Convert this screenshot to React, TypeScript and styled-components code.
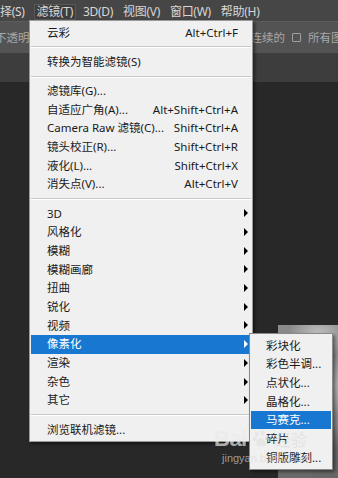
import React from "react";
import styled, { createGlobalStyle } from "styled-components";

const FONT = `"Noto Sans", "Noto Sans CJK SC", sans-serif`;

const Global = createGlobalStyle`
  html, body { margin: 0; padding: 0; background: #282828; }
  body { width: 338px; height: 478px; overflow: hidden; }
  * { box-sizing: border-box; }
`;

const Screen = styled.div`
  position: relative;
  width: 338px;
  height: 478px;
  overflow: hidden;
  display: flex;
  flex-direction: column;
  font-family: ${FONT};
  background: #282828;
`;

const MenuBar = styled.div`
  height: 21px;
  flex: none;
  display: flex;
  align-items: center;
  gap: 4px;
  padding-top: 3px;
  background: #464646;
  color: #d6d6d6;
  font-size: 12px;
  line-height: 1;
`;

const MenuBarItem = styled.div<{ $active?: boolean; $first?: boolean }>`
  height: 16px;
  display: flex;
  align-items: center;
  padding: 0 2px;
  margin-left: ${(p) => (p.$first ? "-3px" : "0")};
  margin-right: ${(p) => (p.$first ? "2px" : "0")};
  background: ${(p) => (p.$active ? "#3e3e3e" : "transparent")};
  border: 1px solid ${(p) => (p.$active ? "#585858" : "transparent")};
  white-space: nowrap;
  letter-spacing: -0.3px;
`;

const OptionsBar = styled.div`
  height: 32px;
  flex: none;
  display: flex;
  align-items: center;
  justify-content: space-between;
  background: #535353;
  border-top: 1px solid #5c5c5c;
  color: #a8a8a8;
  font-size: 11.5px;
  line-height: 1;
  overflow: hidden;
`;

const OptionsLeft = styled.div`
  margin-left: -5px;
  white-space: nowrap;
`;

const OptionsRight = styled.div`
  display: flex;
  align-items: center;
  gap: 7px;
  white-space: nowrap;
  margin-right: -16px;
`;

const CheckBox = styled.span`
  width: 9px;
  height: 9px;
  border: 1px solid #a0a0a0;
  border-radius: 1px;
  display: inline-block;
`;

const TabStrip = styled.div`
  height: 29px;
  flex: none;
  background: #3d3d3d;
`;

const Canvas = styled.div`
  flex: 1;
  display: flex;
  padding: 243px 0 0 278px;
  background: #282828;
`;

const CloudImage = styled.div`
  flex: 1;
  background:
    radial-gradient(ellipse 30px 24px at 40px 10px, #c2c2c2 0%, rgba(194,194,194,0) 100%),
    radial-gradient(ellipse 26px 30px at 55px 60px, #b0b0b0 0%, rgba(176,176,176,0) 100%),
    radial-gradient(ellipse 22px 26px at 20px 90px, #9c9c9c 0%, rgba(156,156,156,0) 100%),
    radial-gradient(ellipse 30px 30px at 50px 130px, #5e5e5e 0%, rgba(94,94,94,0) 100%),
    linear-gradient(180deg, #8a8a8a 0%, #8f8f8f 50%, #6a6a6a 100%);
`;

const DropMenu = styled.div`
  position: absolute;
  left: 29px;
  top: 20px;
  width: 224px;
  padding: 2px 1px;
  background: #f0f0f0;
  border: 1px solid #9a9a9a;
  box-shadow: 2px 2px 3px rgba(0, 0, 0, 0.45);
  font-size: 11.5px;
  line-height: 1;
  color: #1a1a1a;
`;

const SubMenu = styled(DropMenu)`
  left: 249px;
  top: 333px;
  width: 84px;
  border-color: #8a8a8a;
`;

const Row = styled.div<{ $active?: boolean; $indent?: number }>`
  height: 18.7px;
  display: grid;
  grid-template-columns: 1fr auto 13px;
  align-items: center;
  padding-left: ${(p) => p.$indent ?? 16}px;
  background: ${(p) => (p.$active ? "#1777d1" : "transparent")};
  color: ${(p) => (p.$active ? "#ffffff" : "#1a1a1a")};
  white-space: nowrap;
`;

const Label = styled.span``;

const Shortcut = styled.span`
  text-align: right;
  padding-left: 8px;
`;

const Arrow = styled.span<{ $active?: boolean }>`
  justify-self: end;
  margin-right: 3px;
  width: 0;
  height: 0;
  border-top: 4px solid transparent;
  border-bottom: 4px solid transparent;
  border-left: 4px solid ${(p) => (p.$active ? "#ffffff" : "#000000")};
`;

const Separator = styled.div`
  height: 10.5px;
  display: flex;
  align-items: center;
  &::after {
    content: "";
    flex: 1;
    height: 1px;
    background: #c8c8c8;
    box-shadow: 0 1px 0 #ffffff;
  }
`;

const Watermark = styled.div`
  position: absolute;
  left: 214px;
  top: 428px;
  display: grid;
  grid-template-columns: auto auto auto;
  align-items: center;
  column-gap: 2px;
  pointer-events: none;
`;

const WmBai = styled.span`
  font-family: "Liberation Sans", sans-serif;
  font-weight: bold;
  font-size: 22px;
  line-height: 1;
  color: rgba(235, 235, 235, 0.7);
  letter-spacing: -0.5px;
`;

const WmJing = styled.span`
  font-size: 16px;
  line-height: 1;
  color: rgba(200, 200, 200, 0.35);
  font-family: "Noto Sans CJK SC", sans-serif;
`;

const WmSub = styled.span`
  grid-column: 1 / span 3;
  font-family: "Liberation Sans", sans-serif;
  font-size: 11px;
  line-height: 1;
  margin-top: 3px;
  margin-left: 8px;
  color: rgba(220, 220, 220, 0.65);
`;

type Item =
  | { sep: true }
  | { label: string; shortcut?: string; sub?: boolean; active?: boolean };

const mainItems: Item[] = [
  { label: "云彩", shortcut: "Alt+Ctrl+F" },
  { sep: true },
  { label: "转换为智能滤镜(S)" },
  { sep: true },
  { label: "滤镜库(G)..." },
  { label: "自适应广角(A)...", shortcut: "Alt+Shift+Ctrl+A" },
  { label: "Camera Raw 滤镜(C)...", shortcut: "Shift+Ctrl+A" },
  { label: "镜头校正(R)...", shortcut: "Shift+Ctrl+R" },
  { label: "液化(L)...", shortcut: "Shift+Ctrl+X" },
  { label: "消失点(V)...", shortcut: "Alt+Ctrl+V" },
  { sep: true },
  { label: "3D", sub: true },
  { label: "风格化", sub: true },
  { label: "模糊", sub: true },
  { label: "模糊画廊", sub: true },
  { label: "扭曲", sub: true },
  { label: "锐化", sub: true },
  { label: "视频", sub: true },
  { label: "像素化", sub: true, active: true },
  { label: "渲染", sub: true },
  { label: "杂色", sub: true },
  { label: "其它", sub: true },
  { sep: true },
  { label: "浏览联机滤镜..." },
];

const subItems = [
  { label: "彩块化" },
  { label: "彩色半调..." },
  { label: "点状化..." },
  { label: "晶格化..." },
  { label: "马赛克...", active: true },
  { label: "碎片" },
  { label: "铜版雕刻..." },
];

function Paw() {
  return (
    <svg width="16" height="18" viewBox="0 0 16 18">
      <g fill="rgba(225,225,225,0.7)">
        <ellipse cx="4" cy="4" rx="2" ry="2.6" />
        <ellipse cx="9.5" cy="3" rx="2" ry="2.6" />
        <ellipse cx="1.8" cy="9" rx="1.8" ry="2.2" />
        <ellipse cx="13.5" cy="8" rx="1.8" ry="2.2" />
        <path d="M7.5 8 C4 8 2.5 13 3.5 15 C4.5 17 7 16 8 16 C9.5 16 12 17 12.8 15 C13.5 12.5 11 8 7.5 8 Z" />
      </g>
    </svg>
  );
}

export default function App() {
  return (
    <Screen>
      <Global />
      <MenuBar>
        <MenuBarItem $first>择(S)</MenuBarItem>
        <MenuBarItem $active>滤镜(T)</MenuBarItem>
        <MenuBarItem>3D(D)</MenuBarItem>
        <MenuBarItem>视图(V)</MenuBarItem>
        <MenuBarItem>窗口(W)</MenuBarItem>
        <MenuBarItem>帮助(H)</MenuBarItem>
      </MenuBar>
      <OptionsBar>
        <OptionsLeft>不透明度:</OptionsLeft>
        <OptionsRight>
          <span>连续的</span>
          <CheckBox />
          <span>所有图层</span>
        </OptionsRight>
      </OptionsBar>
      <TabStrip />
      <Canvas>
        <CloudImage />
      </Canvas>

      <DropMenu>
        {mainItems.map((it, i) =>
          "sep" in it ? (
            <Separator key={i} />
          ) : (
            <Row key={i} $active={it.active}>
              <Label>{it.label}</Label>
              <Shortcut>{it.shortcut ?? ""}</Shortcut>
              {it.sub ? <Arrow $active={it.active} /> : <span />}
            </Row>
          )
        )}
      </DropMenu>

      <SubMenu>
        {subItems.map((it, i) => (
          <Row key={i} $active={it.active} $indent={15}>
            <Label>{it.label}</Label>
            <Shortcut />
            <span />
          </Row>
        ))}
      </SubMenu>

      <Watermark>
        <WmBai>Bai</WmBai>
        <Paw />
        <WmJing>经验</WmJing>
        <WmSub>jingyan.baidu.com</WmSub>
      </Watermark>
    </Screen>
  );
}
